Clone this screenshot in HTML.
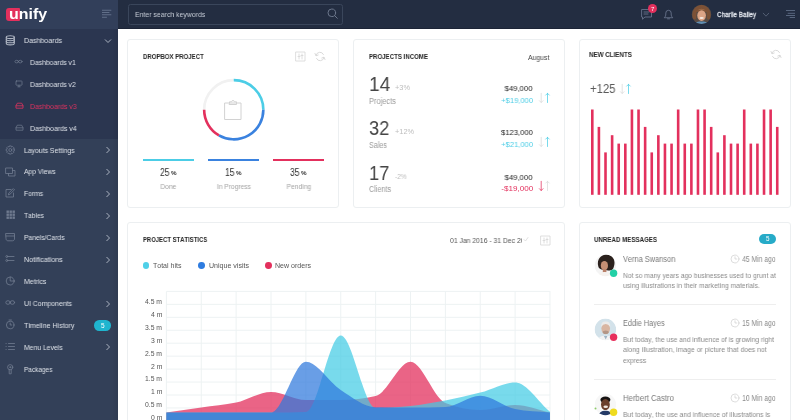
<!DOCTYPE html><html><head><meta charset="utf-8"><style>
html,body{margin:0;padding:0;width:800px;height:420px;overflow:hidden;background:#fff;font-family:"Liberation Sans",sans-serif;}
.r{position:absolute;}
.t{position:absolute;white-space:nowrap;line-height:1;font-kerning:none;will-change:transform;}
</style></head><body>
<div class="r" style="left:0px;top:0px;width:118px;height:29px;background:#323f5a;"></div>
<div class="r" style="left:0px;top:29px;width:118px;height:110px;background:#2b3650;"></div>
<div class="r" style="left:0px;top:139px;width:118px;height:281px;background:#334058;"></div>
<div class="r" style="left:112px;top:29px;width:6px;height:391px;background:linear-gradient(90deg, rgba(0,0,0,0), rgba(0,0,0,0.07));"></div>
<div class="r" style="left:118px;top:0px;width:682px;height:29px;background:#232d41;"></div>
<div class="r" style="left:118px;top:28px;width:682px;height:1px;background:#1c2436;"></div>
<div class="r" style="left:6px;top:7.5px;width:13.5px;height:13px;background:#e3305d;border-radius:3px 1px 1px 3px"></div>
<div class="t" style="left:9.20px;top:6.33px;font-size:15.2px;color:#ffffff;font-weight:bold;transform:scaleX(1.052);transform-origin:left 50%;">unify</div>
<svg class="r" style="left:101px;top:9px" width="12" height="10"><g stroke="#66758e" stroke-width="0.9"><line x1="1" y1="1.25" x2="10.3" y2="1.25"/><line x1="1" y1="3.5" x2="8.4" y2="3.5"/><line x1="1" y1="5.75" x2="10.3" y2="5.75"/><line x1="1" y1="8.25" x2="5.9" y2="8.25"/></g></svg>
<div class="t" style="left:23.60px;top:36.92px;font-size:7.3px;color:#dde1e8;transform:scaleX(0.965);transform-origin:left 50%;">Dashboards</div>
<svg class="r" style="left:104px;top:37.6px" width="8" height="6"><polyline points="1,1.5 4,4.5 7,1.5" fill="none" stroke="#aab2c0" stroke-width="1"/></svg>
<div class="t" style="left:29.60px;top:58.84px;font-size:7.3px;color:#dde1e8;transform:scaleX(0.933);transform-origin:left 50%;">Dashboards v1</div>
<div class="t" style="left:29.60px;top:80.76px;font-size:7.3px;color:#dde1e8;transform:scaleX(0.933);transform-origin:left 50%;">Dashboards v2</div>
<div class="t" style="left:29.60px;top:102.68px;font-size:7.3px;color:#e0325f;transform:scaleX(0.951);transform-origin:left 50%;">Dashboards v3</div>
<div class="t" style="left:29.60px;top:124.60px;font-size:7.3px;color:#dde1e8;transform:scaleX(0.951);transform-origin:left 50%;">Dashboards v4</div>
<div class="t" style="left:23.60px;top:146.52px;font-size:7.3px;color:#dde1e8;transform:scaleX(0.938);transform-origin:left 50%;">Layouts Settings</div>
<svg class="r" style="left:105px;top:146.20000000000002px" width="6" height="8"><polyline points="1.5,1 4.5,4 1.5,7" fill="none" stroke="#aab2c0" stroke-width="1"/></svg>
<div class="t" style="left:23.60px;top:168.44px;font-size:7.3px;color:#dde1e8;transform:scaleX(0.919);transform-origin:left 50%;">App Views</div>
<svg class="r" style="left:105px;top:168.12px" width="6" height="8"><polyline points="1.5,1 4.5,4 1.5,7" fill="none" stroke="#aab2c0" stroke-width="1"/></svg>
<div class="t" style="left:23.60px;top:190.36px;font-size:7.3px;color:#dde1e8;transform:scaleX(0.924);transform-origin:left 50%;">Forms</div>
<svg class="r" style="left:105px;top:190.04px" width="6" height="8"><polyline points="1.5,1 4.5,4 1.5,7" fill="none" stroke="#aab2c0" stroke-width="1"/></svg>
<div class="t" style="left:23.60px;top:212.28px;font-size:7.3px;color:#dde1e8;transform:scaleX(0.908);transform-origin:left 50%;">Tables</div>
<svg class="r" style="left:105px;top:211.96px" width="6" height="8"><polyline points="1.5,1 4.5,4 1.5,7" fill="none" stroke="#aab2c0" stroke-width="1"/></svg>
<div class="t" style="left:23.60px;top:234.20px;font-size:7.3px;color:#dde1e8;transform:scaleX(0.926);transform-origin:left 50%;">Panels/Cards</div>
<svg class="r" style="left:105px;top:233.88000000000002px" width="6" height="8"><polyline points="1.5,1 4.5,4 1.5,7" fill="none" stroke="#aab2c0" stroke-width="1"/></svg>
<div class="t" style="left:23.60px;top:256.12px;font-size:7.3px;color:#dde1e8;transform:scaleX(0.976);transform-origin:left 50%;">Notifications</div>
<svg class="r" style="left:105px;top:255.8px" width="6" height="8"><polyline points="1.5,1 4.5,4 1.5,7" fill="none" stroke="#aab2c0" stroke-width="1"/></svg>
<div class="t" style="left:23.60px;top:278.04px;font-size:7.3px;color:#dde1e8;transform:scaleX(0.957);transform-origin:left 50%;">Metrics</div>
<div class="t" style="left:23.60px;top:299.96px;font-size:7.3px;color:#dde1e8;transform:scaleX(0.946);transform-origin:left 50%;">UI Components</div>
<svg class="r" style="left:105px;top:299.64000000000004px" width="6" height="8"><polyline points="1.5,1 4.5,4 1.5,7" fill="none" stroke="#aab2c0" stroke-width="1"/></svg>
<div class="t" style="left:23.60px;top:321.88px;font-size:7.3px;color:#dde1e8;transform:scaleX(0.963);transform-origin:left 50%;">Timeline History</div>
<div class="r" style="left:94.3px;top:320.4px;width:16.8px;height:10.3px;border-radius:5.2px;background:#1fb5cf"></div>
<div class="t" style="left:100.89px;top:322.70px;font-size:6.5px;color:#ffffff;">5</div>
<div class="t" style="left:23.60px;top:343.80px;font-size:7.3px;color:#dde1e8;transform:scaleX(0.935);transform-origin:left 50%;">Menu Levels</div>
<svg class="r" style="left:105px;top:343.48px" width="6" height="8"><polyline points="1.5,1 4.5,4 1.5,7" fill="none" stroke="#aab2c0" stroke-width="1"/></svg>
<div class="t" style="left:23.60px;top:365.72px;font-size:7.3px;color:#dde1e8;transform:scaleX(0.886);transform-origin:left 50%;">Packages</div>
<svg class="r" style="left:5px;top:35.0px" width="11" height="11" viewBox="0 0 11 11"><g fill="none" stroke="#aeb5c2" stroke-width="1.1" stroke-linecap="round" stroke-linejoin="round"><ellipse cx="5.3" cy="2.2" rx="4" ry="1.4"/><path d="M1.3 2.2v6.3c0 .8 1.8 1.4 4 1.4s4-.6 4-1.4V2.2"/><path d="M1.3 4.3c0 .8 1.8 1.4 4 1.4s4-.6 4-1.4"/><path d="M1.3 6.4c0 .8 1.8 1.4 4 1.4s4-.6 4-1.4"/></g></svg>
<svg class="r" style="left:14px;top:58.9px" width="9" height="6" viewBox="0 0 9 6"><g fill="none" stroke="#717c91" stroke-width="0.7" stroke-linecap="round" stroke-linejoin="round"><ellipse cx="2.7" cy="2.6" rx="1.8" ry="1.3"/><ellipse cx="6.3" cy="2.6" rx="1.8" ry="1.3"/></g></svg>
<svg class="r" style="left:15px;top:80.3px" width="8" height="8" viewBox="0 0 8 8"><g fill="none" stroke="#717c91" stroke-width="0.7" stroke-linecap="round" stroke-linejoin="round"><rect x="1" y="1" width="6" height="4.2" rx="0.5"/><line x1="4" y1="5.2" x2="4" y2="6.8"/><line x1="2.8" y1="6.8" x2="5.2" y2="6.8"/></g></svg>
<svg class="r" style="left:14.5px;top:102.4px" width="9" height="7" viewBox="0 0 9 7"><g fill="none" stroke="#e0325f" stroke-width="0.8" stroke-linecap="round" stroke-linejoin="round"><path d="M1 5.8V3.8L2.3 1.2h4.4L8 3.8v2z"/><line x1="1" y1="3.8" x2="8" y2="3.8"/></g></svg>
<svg class="r" style="left:14.5px;top:124.3px" width="9" height="7" viewBox="0 0 9 7"><g fill="none" stroke="#717c91" stroke-width="0.7" stroke-linecap="round" stroke-linejoin="round"><path d="M1 5.8V3.8L2.3 1.2h4.4L8 3.8v2z"/><line x1="1" y1="3.8" x2="8" y2="3.8"/></g></svg>
<svg class="r" style="left:5px;top:144.6px" width="11" height="10" viewBox="0 0 11 10"><g fill="none" stroke="#717c91" stroke-width="0.75" stroke-linecap="round" stroke-linejoin="round"><path d="M9.40 4.08L9.40 5.92L8.29 6.13L8.21 6.32L8.85 7.25L7.55 8.55L6.62 7.91L6.43 7.99L6.22 9.10L4.38 9.10L4.17 7.99L3.98 7.91L3.05 8.55L1.75 7.25L2.39 6.32L2.31 6.13L1.20 5.92L1.20 4.08L2.31 3.87L2.39 3.68L1.75 2.75L3.05 1.45L3.98 2.09L4.17 2.01L4.38 0.90L6.22 0.90L6.43 2.01L6.62 2.09L7.55 1.45L8.85 2.75L8.21 3.68L8.29 3.87Z"/><circle cx="5.3" cy="5" r="1.5"/></g></svg>
<svg class="r" style="left:5px;top:166.52px" width="11" height="10" viewBox="0 0 11 10"><g fill="none" stroke="#717c91" stroke-width="0.8" stroke-linecap="round" stroke-linejoin="round"><rect x="1" y="1" width="6.5" height="5.5"/><path d="M3.5 6.5v2.5h6.5v-5.5h-2.5"/></g></svg>
<svg class="r" style="left:5px;top:188.44px" width="11" height="10" viewBox="0 0 11 10"><g fill="none" stroke="#717c91" stroke-width="0.8" stroke-linecap="round" stroke-linejoin="round"><path d="M6 1.5H1v7.5h7.5V5"/><path d="M3.5 6.5l.4-1.6L8.3.6l1.2 1.2-4.4 4.3z"/></g></svg>
<svg class="r" style="left:5.5px;top:210.4px" width="10" height="10"><rect x="0.5" y="0.5" width="2.4" height="2.4" fill="#6f7a8f"/><rect x="0.5" y="3.5" width="2.4" height="2.4" fill="#6f7a8f"/><rect x="0.5" y="6.5" width="2.4" height="2.4" fill="#6f7a8f"/><rect x="3.5" y="0.5" width="2.4" height="2.4" fill="#6f7a8f"/><rect x="3.5" y="3.5" width="2.4" height="2.4" fill="#6f7a8f"/><rect x="3.5" y="6.5" width="2.4" height="2.4" fill="#6f7a8f"/><rect x="6.5" y="0.5" width="2.4" height="2.4" fill="#6f7a8f"/><rect x="6.5" y="3.5" width="2.4" height="2.4" fill="#6f7a8f"/><rect x="6.5" y="6.5" width="2.4" height="2.4" fill="#6f7a8f"/></svg>
<svg class="r" style="left:5px;top:232.28px" width="11" height="10" viewBox="0 0 11 10"><g fill="none" stroke="#717c91" stroke-width="0.8" stroke-linecap="round" stroke-linejoin="round"><path d="M1 1.5h8.5v5.5c0 1-1 1.8-2 1.8H3c-1 0-2-.8-2-1.8z"/><line x1="1" y1="4" x2="9.5" y2="4"/></g></svg>
<svg class="r" style="left:5px;top:254.2px" width="11" height="10" viewBox="0 0 11 10"><g fill="none" stroke="#717c91" stroke-width="0.8" stroke-linecap="round" stroke-linejoin="round"><circle cx="1.8" cy="2.5" r="1"/><line x1="3.5" y1="2.5" x2="9" y2="2.5"/><circle cx="1.8" cy="6.5" r="1"/><line x1="3.5" y1="6.5" x2="9" y2="6.5"/></g></svg>
<svg class="r" style="left:5px;top:276.12px" width="11" height="10" viewBox="0 0 11 10"><g fill="none" stroke="#717c91" stroke-width="0.8" stroke-linecap="round" stroke-linejoin="round"><circle cx="5.2" cy="5" r="4"/><path d="M5.2 1v4h4"/></g></svg>
<svg class="r" style="left:5px;top:299.04px" width="11" height="8" viewBox="0 0 11 8"><g fill="none" stroke="#717c91" stroke-width="0.8" stroke-linecap="round" stroke-linejoin="round"><ellipse cx="3" cy="3.5" rx="2.2" ry="1.8"/><ellipse cx="7.4" cy="3.5" rx="2.2" ry="1.8"/></g></svg>
<svg class="r" style="left:5px;top:318.96px" width="11" height="11" viewBox="0 0 11 11"><g fill="none" stroke="#717c91" stroke-width="0.8" stroke-linecap="round" stroke-linejoin="round"><circle cx="5.2" cy="6" r="3.8"/><path d="M5.2 4v2h1.5"/><line x1="4" y1="1" x2="6.4" y2="1"/></g></svg>
<svg class="r" style="left:5px;top:341.88px" width="11" height="9" viewBox="0 0 11 9"><g fill="none" stroke="#717c91" stroke-width="0.8" stroke-linecap="round" stroke-linejoin="round"><line x1="1" y1="1.5" x2="1.2" y2="1.5"/><line x1="1" y1="4.5" x2="1.2" y2="4.5"/><line x1="1" y1="7.5" x2="1.2" y2="7.5"/><line x1="3.5" y1="1.5" x2="9.5" y2="1.5"/><line x1="3.5" y1="4.5" x2="9.5" y2="4.5"/><line x1="3.5" y1="7.5" x2="9.5" y2="7.5"/></g></svg>
<svg class="r" style="left:6px;top:363.8px" width="9" height="11" viewBox="0 0 9 11"><g fill="none" stroke="#717c91" stroke-width="0.8" stroke-linecap="round" stroke-linejoin="round"><circle cx="4.2" cy="3.2" r="2.6"/><path d="M3.2 5.6v4.2h2V5.6"/><circle cx="4.2" cy="3.2" r="0.6"/></g></svg>
<div class="r" style="left:128px;top:3.5px;width:214.5px;height:21px;box-sizing:border-box;border:1px solid #3a465b;border-radius:2.5px"></div>
<div class="t" style="left:135.00px;top:11.23px;font-size:8px;color:#c6ccd6;transform:scaleX(0.864);transform-origin:left 50%;">Enter search keywords</div>
<svg class="r" style="left:326px;top:7px" width="13" height="13" viewBox="0 0 13 13"><g fill="none" stroke="#6c778c" stroke-width="1" stroke-linecap="round" stroke-linejoin="round"><circle cx="5.8" cy="5.8" r="3.8"/><line x1="8.6" y1="8.6" x2="11.3" y2="11.3"/></g></svg>
<svg class="r" style="left:640px;top:7px" width="14" height="14" viewBox="0 0 14 14"><g fill="none" stroke="#67728a" stroke-width="0.9" stroke-linecap="round" stroke-linejoin="round"><path d="M2 2.5h9.5v7.5H5l-2.5 2.2V10H2z"/><line x1="4" y1="5" x2="9" y2="5"/><line x1="4" y1="7" x2="8" y2="7"/></g></svg>
<div class="r" style="left:648.2px;top:3.6px;width:9px;height:9px;border-radius:50%;background:#e3305d"></div>
<div class="t" style="left:651.03px;top:5.82px;font-size:6px;color:#ffffff;">7</div>
<svg class="r" style="left:663px;top:8px" width="11" height="12" viewBox="0 0 11 12"><g fill="none" stroke="#67728a" stroke-width="0.9" stroke-linecap="round" stroke-linejoin="round"><path d="M1.5 9.5c1-.8 1.3-2 1.3-3.5V5a2.7 2.7 0 0 1 5.4 0v1c0 1.5.3 2.7 1.3 3.5z"/><path d="M4.5 10.8h2"/></g></svg>
<div class="t" style="left:717.30px;top:10.60px;font-size:7.8px;color:#dfe3ea;transform:scaleX(0.813);transform-origin:left 50%;-webkit-text-stroke:0.3px #dfe3ea;">Charlie Bailey</div>
<svg class="r" style="left:762px;top:12px" width="9" height="6" viewBox="0 0 9 6"><g fill="none" stroke="#5f6b80" stroke-width="0.8" stroke-linecap="round" stroke-linejoin="round"><polyline points="1.2,1.2 4,4.2 6.8,1.2"/></g></svg>
<svg class="r" style="left:785px;top:9px" width="12" height="10"><g stroke="#5f6d86" stroke-width="0.9"><line x1="1" y1="1.5" x2="10" y2="1.5"/><line x1="2.7" y1="4.3" x2="10" y2="4.3"/><line x1="1" y1="6.5" x2="10" y2="6.5"/><line x1="4.7" y1="8.5" x2="10" y2="8.5"/></g></svg>
<div class="r" style="left:127px;top:39px;width:212px;height:168.5px;box-sizing:border-box;border:1px solid #eceff1;border-radius:3px;background:#fff"></div>
<div class="r" style="left:353.3px;top:39px;width:211.5px;height:168.5px;box-sizing:border-box;border:1px solid #eceff1;border-radius:3px;background:#fff"></div>
<div class="r" style="left:579.3px;top:39px;width:211.8px;height:168.5px;box-sizing:border-box;border:1px solid #eceff1;border-radius:3px;background:#fff"></div>
<div class="r" style="left:127px;top:221.5px;width:437.8px;height:220px;box-sizing:border-box;border:1px solid #eceff1;border-radius:3px;background:#fff"></div>
<div class="r" style="left:579.3px;top:221.5px;width:211.8px;height:220px;box-sizing:border-box;border:1px solid #eceff1;border-radius:3px;background:#fff"></div>
<div class="t" style="left:142.80px;top:52.82px;font-size:7.3px;color:#262626;font-weight:bold;transform:scaleX(0.827);transform-origin:left 50%;">DROPBOX PROJECT</div>
<svg class="r" style="left:295px;top:50.5px" width="11" height="11" viewBox="0 0 11 11"><g fill="none" stroke="#d6d6d6" stroke-width="0.8" stroke-linecap="round" stroke-linejoin="round"><rect x="1" y="1" width="9" height="9"/><line x1="4" y1="3" x2="4" y2="8"/><line x1="7" y1="3" x2="7" y2="8"/><line x1="3" y1="5.5" x2="5" y2="5.5"/><line x1="6" y1="4.5" x2="8" y2="4.5"/></g></svg>
<svg class="r" style="left:314px;top:50.5px" width="12" height="11" viewBox="0 0 12 11"><g fill="none" stroke="#d6d6d6" stroke-width="0.9" stroke-linecap="round" stroke-linejoin="round"><path d="M2 4.5A4 4 0 0 1 9.5 3.5"/><path d="M10 6.5A4 4 0 0 1 2.5 7.5"/><polyline points="1,2.5 2,4.8 4.2,4"/><polyline points="11,8.5 10,6.2 7.8,7"/></g></svg>
<svg class="r" style="left:0;top:0" width="800" height="420"><path d="M204.15 109.75A29.6 29.6 0 0 1 233.75 80.15" stroke="#f1f1f1" stroke-width="2.6" fill="none"/><path d="M233.75 80.15A29.6 29.6 0 0 1 263.35 109.75" stroke="#4ccde6" stroke-width="2.6" fill="none"/><path d="M263.35 109.75A29.6 29.6 0 0 1 218.95 135.38" stroke="#3a82df" stroke-width="2.6" fill="none"/><path d="M218.95 135.38A29.6 29.6 0 0 1 204.15 109.75" stroke="#e3305d" stroke-width="2.6" fill="none"/></svg>
<svg class="r" style="left:223px;top:100px" width="20" height="21" viewBox="0 0 20 21"><g fill="none" stroke="#d2d2d2" stroke-width="1" stroke-linecap="round" stroke-linejoin="round"><rect x="2" y="3" width="16" height="16.5"/><path d="M6.5 3V1.8h2.2A1.3 1.3 0 0 1 11.3 1.8h2.2V3v1.5h-7z"/></g></svg>
<div class="r" style="left:143px;top:159.1px;width:51px;height:1.9px;background:#4ccde6;"></div>
<div class="r" style="left:208px;top:159.1px;width:51px;height:1.9px;background:#3a82df;"></div>
<div class="r" style="left:273px;top:159.1px;width:51px;height:1.9px;background:#e3305d;"></div>
<div class="t" style="left:159.60px;top:168.23px;font-size:10px;color:#2e2e2e;transform:scaleX(0.854);transform-origin:left 50%;">25</div>
<div class="t" style="left:171.40px;top:170.02px;font-size:6px;color:#333333;font-weight:bold;transform:scaleX(1.050);transform-origin:left 50%;">%</div>
<div class="t" style="left:160.13px;top:183.07px;font-size:7px;color:#a3a3a3;transform:scaleX(0.956);transform-origin:center 50%;">Done</div>
<div class="t" style="left:224.60px;top:168.23px;font-size:10px;color:#2e2e2e;transform:scaleX(0.854);transform-origin:left 50%;">15</div>
<div class="t" style="left:236.40px;top:170.02px;font-size:6px;color:#333333;font-weight:bold;transform:scaleX(1.050);transform-origin:left 50%;">%</div>
<div class="t" style="left:215.60px;top:183.07px;font-size:7px;color:#a3a3a3;transform:scaleX(0.950);transform-origin:center 50%;">In Progress</div>
<div class="t" style="left:289.60px;top:168.23px;font-size:10px;color:#2e2e2e;transform:scaleX(0.854);transform-origin:left 50%;">35</div>
<div class="t" style="left:301.40px;top:170.02px;font-size:6px;color:#333333;font-weight:bold;transform:scaleX(1.050);transform-origin:left 50%;">%</div>
<div class="t" style="left:285.66px;top:183.07px;font-size:7px;color:#a3a3a3;transform:scaleX(0.954);transform-origin:center 50%;">Pending</div>
<div class="t" style="left:368.50px;top:53.32px;font-size:7.3px;color:#262626;font-weight:bold;transform:scaleX(0.836);transform-origin:left 50%;">PROJECTS INCOME</div>
<div class="t" style="left:527.28px;top:53.61px;font-size:7.2px;color:#444444;transform:scaleX(0.955);transform-origin:right 50%;">August</div>
<div class="t" style="left:369.20px;top:74.25px;font-size:20.5px;color:#454545;transform:scaleX(0.934);transform-origin:left 50%;">14</div>
<div class="t" style="left:395.00px;top:85.24px;font-size:6.8px;color:#bdbdbd;transform:scaleX(1.087);transform-origin:left 50%;">+3%</div>
<div class="t" style="left:369.00px;top:96.97px;font-size:8.3px;color:#9a9a9a;transform:scaleX(0.901);transform-origin:left 50%;">Projects</div>
<div class="t" style="left:504.44px;top:85.11px;font-size:7.9px;color:#222222;transform:scaleX(0.981);transform-origin:right 50%;">$49,000</div>
<div class="t" style="left:499.83px;top:96.51px;font-size:7.9px;color:#4ccde6;transform:scaleX(0.965);transform-origin:right 50%;">+$19,000</div>
<svg class="r" style="left:537px;top:92.0px" width="15" height="12" viewBox="0 0 15 12"><g fill="none" stroke="#717c91" stroke-width="0.75" stroke-linecap="round" stroke-linejoin="round"><g stroke="#d9d9d9"><line x1="4.2" y1="1.3" x2="4.2" y2="10.5"/><polyline points="2.4,8.7 4.2,10.5 6,8.7"/></g><g stroke="#4ccde6"><line x1="10.5" y1="1.3" x2="10.5" y2="10.5"/><polyline points="8.7,3.1 10.5,1.3 12.3,3.1"/></g></g></svg>
<div class="t" style="left:369.20px;top:118.45px;font-size:20.5px;color:#454545;transform:scaleX(0.886);transform-origin:left 50%;">32</div>
<div class="t" style="left:395.00px;top:129.44px;font-size:6.8px;color:#bdbdbd;transform:scaleX(1.081);transform-origin:left 50%;">+12%</div>
<div class="t" style="left:369.00px;top:141.17px;font-size:8.3px;color:#9a9a9a;transform:scaleX(0.867);transform-origin:left 50%;">Sales</div>
<div class="t" style="left:500.05px;top:129.31px;font-size:7.9px;color:#222222;transform:scaleX(0.971);transform-origin:right 50%;">$123,000</div>
<div class="t" style="left:499.83px;top:140.71px;font-size:7.9px;color:#4ccde6;transform:scaleX(0.965);transform-origin:right 50%;">+$21,000</div>
<svg class="r" style="left:537px;top:136.2px" width="15" height="12" viewBox="0 0 15 12"><g fill="none" stroke="#717c91" stroke-width="0.75" stroke-linecap="round" stroke-linejoin="round"><g stroke="#d9d9d9"><line x1="4.2" y1="1.3" x2="4.2" y2="10.5"/><polyline points="2.4,8.7 4.2,10.5 6,8.7"/></g><g stroke="#4ccde6"><line x1="10.5" y1="1.3" x2="10.5" y2="10.5"/><polyline points="8.7,3.1 10.5,1.3 12.3,3.1"/></g></g></svg>
<div class="t" style="left:369.20px;top:162.65px;font-size:20.5px;color:#454545;transform:scaleX(0.886);transform-origin:left 50%;">17</div>
<div class="t" style="left:395.00px;top:173.64px;font-size:6.8px;color:#bdbdbd;transform:scaleX(0.951);transform-origin:left 50%;">-2%</div>
<div class="t" style="left:369.00px;top:185.37px;font-size:8.3px;color:#9a9a9a;transform:scaleX(0.867);transform-origin:left 50%;">Clients</div>
<div class="t" style="left:504.44px;top:173.51px;font-size:7.9px;color:#222222;transform:scaleX(0.981);transform-origin:right 50%;">$49,000</div>
<div class="t" style="left:501.81px;top:184.91px;font-size:7.9px;color:#e3305d;transform:scaleX(1.026);transform-origin:right 50%;">-$19,000</div>
<svg class="r" style="left:537px;top:180.4px" width="15" height="12" viewBox="0 0 15 12"><g fill="none" stroke="#717c91" stroke-width="0.75" stroke-linecap="round" stroke-linejoin="round"><g stroke="#e3305d"><line x1="4.2" y1="1.3" x2="4.2" y2="10.5"/><polyline points="2.4,8.7 4.2,10.5 6,8.7"/></g><g stroke="#d9d9d9"><line x1="10.5" y1="1.3" x2="10.5" y2="10.5"/><polyline points="8.7,3.1 10.5,1.3 12.3,3.1"/></g></g></svg>
<div class="t" style="left:589.20px;top:51.02px;font-size:7.3px;color:#262626;font-weight:bold;transform:scaleX(0.851);transform-origin:left 50%;">NEW CLIENTS</div>
<svg class="r" style="left:770px;top:48.5px" width="12" height="11" viewBox="0 0 12 11"><g fill="none" stroke="#d6d6d6" stroke-width="0.9" stroke-linecap="round" stroke-linejoin="round"><path d="M2 4.5A4 4 0 0 1 9.5 3.5"/><path d="M10 6.5A4 4 0 0 1 2.5 7.5"/><polyline points="1,2.5 2,4.8 4.2,4"/><polyline points="11,8.5 10,6.2 7.8,7"/></g></svg>
<div class="t" style="left:589.50px;top:83.14px;font-size:12px;color:#5a5a5a;transform:scaleX(0.943);transform-origin:left 50%;">+125</div>
<svg class="r" style="left:618px;top:83px" width="15" height="12" viewBox="0 0 15 12"><g fill="none" stroke="#717c91" stroke-width="0.75" stroke-linecap="round" stroke-linejoin="round"><g stroke="#d9d9d9"><line x1="4.2" y1="1.3" x2="4.2" y2="10.5"/><polyline points="2.4,8.7 4.2,10.5 6,8.7"/></g><g stroke="#4ccde6"><line x1="10.5" y1="1.3" x2="10.5" y2="10.5"/><polyline points="8.7,3.1 10.5,1.3 12.3,3.1"/></g></g></svg>
<svg class="r" style="left:0;top:0" width="800" height="420"><rect x="591.00" y="109.5" width="2.6" height="85.3" fill="#e3305d"/><rect x="597.61" y="126.9" width="2.6" height="67.9" fill="#e3305d"/><rect x="604.21" y="152.4" width="2.6" height="42.4" fill="#e3305d"/><rect x="610.82" y="135.2" width="2.6" height="59.6" fill="#e3305d"/><rect x="617.42" y="143.6" width="2.6" height="51.2" fill="#e3305d"/><rect x="624.02" y="143.6" width="2.6" height="51.2" fill="#e3305d"/><rect x="630.63" y="109.5" width="2.6" height="85.3" fill="#e3305d"/><rect x="637.24" y="109.5" width="2.6" height="85.3" fill="#e3305d"/><rect x="643.84" y="126.9" width="2.6" height="67.9" fill="#e3305d"/><rect x="650.45" y="152.4" width="2.6" height="42.4" fill="#e3305d"/><rect x="657.05" y="135.2" width="2.6" height="59.6" fill="#e3305d"/><rect x="663.65" y="143.6" width="2.6" height="51.2" fill="#e3305d"/><rect x="670.26" y="143.6" width="2.6" height="51.2" fill="#e3305d"/><rect x="676.87" y="109.5" width="2.6" height="85.3" fill="#e3305d"/><rect x="683.47" y="143.6" width="2.6" height="51.2" fill="#e3305d"/><rect x="690.08" y="143.6" width="2.6" height="51.2" fill="#e3305d"/><rect x="696.68" y="109.5" width="2.6" height="85.3" fill="#e3305d"/><rect x="703.28" y="109.5" width="2.6" height="85.3" fill="#e3305d"/><rect x="709.89" y="126.9" width="2.6" height="67.9" fill="#e3305d"/><rect x="716.50" y="152.4" width="2.6" height="42.4" fill="#e3305d"/><rect x="723.10" y="135.2" width="2.6" height="59.6" fill="#e3305d"/><rect x="729.71" y="143.6" width="2.6" height="51.2" fill="#e3305d"/><rect x="736.31" y="143.6" width="2.6" height="51.2" fill="#e3305d"/><rect x="742.91" y="109.5" width="2.6" height="85.3" fill="#e3305d"/><rect x="749.52" y="143.6" width="2.6" height="51.2" fill="#e3305d"/><rect x="756.12" y="143.6" width="2.6" height="51.2" fill="#e3305d"/><rect x="762.73" y="109.5" width="2.6" height="85.3" fill="#e3305d"/><rect x="769.34" y="109.5" width="2.6" height="85.3" fill="#e3305d"/><rect x="775.94" y="126.9" width="2.6" height="67.9" fill="#e3305d"/></svg>
<div class="t" style="left:142.50px;top:236.42px;font-size:7.3px;color:#262626;font-weight:bold;transform:scaleX(0.812);transform-origin:left 50%;">PROJECT STATISTICS</div>
<div class="r" style="left:448px;top:234px;width:78px;height:12px;overflow:hidden"></div>
<div class="t" style="left:450.10px;top:236.57px;font-size:7px;color:#555555;transform:scaleX(0.971);transform-origin:left 50%;clip-path:inset(0 13% 0 0);">01 Jan 2016 - 31 Dec 2016</div>
<svg class="r" style="left:523px;top:236px" width="6" height="6" viewBox="0 0 6 6"><g fill="none" stroke="#cccccc" stroke-width="0.6" stroke-linecap="round" stroke-linejoin="round"><polyline points="1,3.5 2.5,5 5,1.5"/></g></svg>
<svg class="r" style="left:539.5px;top:234.5px" width="11" height="11" viewBox="0 0 11 11"><g fill="none" stroke="#d6d6d6" stroke-width="0.8" stroke-linecap="round" stroke-linejoin="round"><rect x="1" y="1" width="9" height="9"/><line x1="4" y1="3" x2="4" y2="8"/><line x1="7" y1="3" x2="7" y2="8"/><line x1="3" y1="5.5" x2="5" y2="5.5"/><line x1="6" y1="4.5" x2="8" y2="4.5"/></g></svg>
<div class="r" style="left:142.6px;top:262.20000000000005px;width:6.8px;height:6.8px;border-radius:50%;background:#4fd0e8"></div>
<div class="t" style="left:153.00px;top:262.17px;font-size:7px;color:#555555;transform:scaleX(0.986);transform-origin:left 50%;">Total hits</div>
<div class="r" style="left:198.4px;top:262.20000000000005px;width:6.8px;height:6.8px;border-radius:50%;background:#2e7ce0"></div>
<div class="t" style="left:208.80px;top:262.17px;font-size:7px;color:#555555;transform:scaleX(1.008);transform-origin:left 50%;">Unique visits</div>
<div class="r" style="left:265.0px;top:262.20000000000005px;width:6.8px;height:6.8px;border-radius:50%;background:#e3305d"></div>
<div class="t" style="left:275.40px;top:262.17px;font-size:7px;color:#555555;transform:scaleX(1.006);transform-origin:left 50%;">New orders</div>
<svg class="r" style="left:0;top:0" width="800" height="420"><g stroke="#edf2f3" stroke-width="1"><line x1="166.4" y1="291.40" x2="550.2" y2="291.40"/><line x1="166.4" y1="304.35" x2="550.2" y2="304.35"/><line x1="166.4" y1="317.30" x2="550.2" y2="317.30"/><line x1="166.4" y1="330.25" x2="550.2" y2="330.25"/><line x1="166.4" y1="343.20" x2="550.2" y2="343.20"/><line x1="166.4" y1="356.15" x2="550.2" y2="356.15"/><line x1="166.4" y1="369.10" x2="550.2" y2="369.10"/><line x1="166.4" y1="382.05" x2="550.2" y2="382.05"/><line x1="166.4" y1="395.00" x2="550.2" y2="395.00"/><line x1="166.4" y1="407.95" x2="550.2" y2="407.95"/><line x1="166.4" y1="420.90" x2="550.2" y2="420.90"/><line x1="166.40" y1="291.4" x2="166.40" y2="421"/><line x1="201.27" y1="291.4" x2="201.27" y2="421"/><line x1="236.14" y1="291.4" x2="236.14" y2="421"/><line x1="271.01" y1="291.4" x2="271.01" y2="421"/><line x1="305.88" y1="291.4" x2="305.88" y2="421"/><line x1="340.75" y1="291.4" x2="340.75" y2="421"/><line x1="375.62" y1="291.4" x2="375.62" y2="421"/><line x1="410.49" y1="291.4" x2="410.49" y2="421"/><line x1="445.36" y1="291.4" x2="445.36" y2="421"/><line x1="480.23" y1="291.4" x2="480.23" y2="421"/><line x1="515.10" y1="291.4" x2="515.10" y2="421"/><line x1="549.97" y1="291.4" x2="549.97" y2="421"/></g></svg>
<div class="t" style="left:145.19px;top:298.79px;font-size:6.8px;color:#555555;">4.5 m</div>
<div class="t" style="left:150.86px;top:311.74px;font-size:6.8px;color:#555555;">4 m</div>
<div class="t" style="left:145.19px;top:324.69px;font-size:6.8px;color:#555555;">3.5 m</div>
<div class="t" style="left:150.86px;top:337.64px;font-size:6.8px;color:#555555;">3 m</div>
<div class="t" style="left:145.19px;top:350.59px;font-size:6.8px;color:#555555;">2.5 m</div>
<div class="t" style="left:150.86px;top:363.54px;font-size:6.8px;color:#555555;">2 m</div>
<div class="t" style="left:145.19px;top:376.49px;font-size:6.8px;color:#555555;">1.5 m</div>
<div class="t" style="left:150.86px;top:389.44px;font-size:6.8px;color:#555555;">1 m</div>
<div class="t" style="left:145.19px;top:402.39px;font-size:6.8px;color:#555555;">0.5 m</div>
<div class="t" style="left:150.86px;top:415.34px;font-size:6.8px;color:#555555;">0 m</div>
<svg class="r" style="left:0;top:0" width="800" height="420"><path d="M166.40 421L166.40 412.60C178.02 410.87 189.65 409.07 201.27 407.40C212.89 405.73 224.52 405.17 236.14 402.60C247.76 400.03 259.39 392.00 271.01 392.00C282.63 392.00 294.26 400.00 305.88 400.00C317.50 400.00 329.13 400.00 340.75 400.00C352.37 400.00 364.00 398.67 375.62 396.00C387.24 393.33 398.87 361.70 410.49 361.70C422.11 361.70 433.74 398.33 445.36 403.00C456.98 407.67 468.61 410.00 480.23 410.00C491.85 410.00 503.48 405.00 515.10 405.00C526.72 405.00 538.35 410.07 549.97 412.60L549.97 421Z" fill="#e3305d" fill-opacity="0.75"/><path d="M166.40 421L166.40 412.60C178.02 412.60 189.65 412.60 201.27 412.60C212.89 412.60 224.52 412.60 236.14 412.60C247.76 412.60 259.39 412.60 271.01 412.60C282.63 412.60 294.26 412.40 305.88 412.00C317.50 411.60 329.13 335.50 340.75 335.50C352.37 335.50 364.00 408.00 375.62 408.00C387.24 408.00 398.87 407.25 410.49 406.00C422.11 404.75 433.74 402.73 445.36 400.50C456.98 398.27 468.61 395.62 480.23 392.60C491.85 389.58 503.48 382.40 515.10 382.40C526.72 382.40 538.35 401.93 549.97 411.70L549.97 421Z" fill="#3fcae4" fill-opacity="0.7"/><path d="M166.40 421L166.40 412.60C178.02 412.60 189.65 412.60 201.27 412.60C212.89 412.60 224.52 412.60 236.14 412.60C247.76 412.60 259.39 412.60 271.01 412.60C282.63 412.60 294.26 361.70 305.88 361.70C317.50 361.70 329.13 382.42 340.75 390.00C352.37 397.58 364.00 406.93 375.62 407.20C387.24 407.47 398.87 407.60 410.49 407.60C422.11 407.60 433.74 407.40 445.36 407.00C456.98 406.60 468.61 395.70 480.23 395.70C491.85 395.70 503.48 406.60 515.10 409.00C526.72 411.40 538.35 411.40 549.97 412.60L549.97 421Z" fill="#2f78dc" fill-opacity="0.72"/></svg>
<div class="t" style="left:593.90px;top:235.82px;font-size:7.3px;color:#262626;font-weight:bold;transform:scaleX(0.845);transform-origin:left 50%;">UNREAD MESSAGES</div>
<div class="r" style="left:759.1px;top:234.3px;width:16.6px;height:9.8px;border-radius:5px;background:#27abc8"></div>
<div class="t" style="left:765.65px;top:236.37px;font-size:6.3px;color:#ffffff;">5</div>
<div class="t" style="left:622.60px;top:254.72px;font-size:8.6px;color:#7a7a7a;transform:scaleX(0.861);transform-origin:left 50%;">Verna Swanson</div>
<div class="t" style="left:733.05px;top:254.82px;font-size:8.6px;color:#8a8a8a;transform:scaleX(0.785);transform-origin:right 50%;">45 Min ago</div>
<svg class="r" style="left:729.5px;top:253.7px" width="10" height="10" viewBox="0 0 10 10"><g fill="none" stroke="#cfcfcf" stroke-width="0.7" stroke-linecap="round" stroke-linejoin="round"><circle cx="5" cy="5" r="4"/><polyline points="5,2.8 5,5 6.8,5"/></g></svg>
<div class="t" style="left:622.60px;top:271.67px;font-size:7.6px;color:#8a8a8a;transform:scaleX(0.883);transform-origin:left 50%;">Not so many years ago businesses used to grunt at</div>
<div class="t" style="left:622.60px;top:282.12px;font-size:7.6px;color:#8a8a8a;transform:scaleX(0.891);transform-origin:left 50%;">using illustrations in their marketing materials.</div>
<div class="t" style="left:622.60px;top:319.02px;font-size:8.6px;color:#7a7a7a;transform:scaleX(0.855);transform-origin:left 50%;">Eddie Hayes</div>
<div class="t" style="left:733.05px;top:319.12px;font-size:8.6px;color:#8a8a8a;transform:scaleX(0.785);transform-origin:right 50%;">15 Min ago</div>
<svg class="r" style="left:729.5px;top:318.0px" width="10" height="10" viewBox="0 0 10 10"><g fill="none" stroke="#cfcfcf" stroke-width="0.7" stroke-linecap="round" stroke-linejoin="round"><circle cx="5" cy="5" r="4"/><polyline points="5,2.8 5,5 6.8,5"/></g></svg>
<div class="t" style="left:622.60px;top:335.97px;font-size:7.6px;color:#8a8a8a;transform:scaleX(0.888);transform-origin:left 50%;">But today, the use and influence of is growing right</div>
<div class="t" style="left:622.60px;top:346.42px;font-size:7.6px;color:#8a8a8a;transform:scaleX(0.900);transform-origin:left 50%;">along illustration, image or picture that does not</div>
<div class="t" style="left:622.60px;top:356.87px;font-size:7.6px;color:#8a8a8a;transform:scaleX(0.872);transform-origin:left 50%;">express</div>
<div class="t" style="left:622.60px;top:393.97px;font-size:8.6px;color:#7a7a7a;transform:scaleX(0.903);transform-origin:left 50%;">Herbert Castro</div>
<div class="t" style="left:733.05px;top:394.07px;font-size:8.6px;color:#8a8a8a;transform:scaleX(0.785);transform-origin:right 50%;">10 Min ago</div>
<svg class="r" style="left:729.5px;top:392.95px" width="10" height="10" viewBox="0 0 10 10"><g fill="none" stroke="#cfcfcf" stroke-width="0.7" stroke-linecap="round" stroke-linejoin="round"><circle cx="5" cy="5" r="4"/><polyline points="5,2.8 5,5 6.8,5"/></g></svg>
<div class="t" style="left:622.60px;top:410.92px;font-size:7.6px;color:#8a8a8a;transform:scaleX(0.894);transform-origin:left 50%;">But today, the use and influence of illustrations is</div>
<svg class="r" style="left:0;top:0" width="800" height="420"><defs><clipPath id="av1"><circle cx="605.4" cy="265.4" r="10.8"/></clipPath></defs><g clip-path="url(#av1)"><circle cx="605.4" cy="265.4" r="10.8" fill="#f4f4f4"/><path d="M597.9 264.4C597.4 257.4 603.4 253.39999999999998 608.4 254.89999999999998C614.4 255.39999999999998 615.4 262.4 613.9 266.4C613.4 269.4 611.4 270.9 608.4 270.4L601.4 269.4C598.4 268.4 598.4 266.4 597.9 264.4Z" fill="#2b211d"/><ellipse cx="604.4" cy="265.7" rx="3.6" ry="4.8" fill="#c58f74"/><rect x="602.8" y="269.4" width="3.6" height="3" fill="#b98069"/><path d="M597.4 277.4Q599.4 271.9 604.4 271.9Q610.4 271.9 612.4 277.4Z" fill="#f6f2ef"/></g><circle cx="613.6" cy="273.2" r="3.7" fill="#22d0a6"/><defs><clipPath id="av2"><circle cx="605.4" cy="329.4" r="10.8"/></clipPath></defs><g clip-path="url(#av2)"><circle cx="605.4" cy="329.4" r="10.8" fill="#d3e2ea"/><ellipse cx="605.6999999999999" cy="328.59999999999997" rx="4.3" ry="5.6" fill="#d9b6a2"/><path d="M601.1 326.9Q600.9 321.4 605.6999999999999 321.59999999999997Q610.4 321.4 610.3 326.9Q608.4 323.9 605.6999999999999 323.9Q602.9 323.9 601.1 326.9Z" fill="#ecebea"/><ellipse cx="605.6999999999999" cy="332.2" rx="3" ry="1.8" fill="#b39686"/><path d="M596.4 341.4Q599.4 335.4 605.6999999999999 335.9Q611.4 335.4 614.4 341.4Z" fill="#f3f3f3"/><path d="M603.9 335.9L605.6999999999999 339.4L607.4 335.9Z" fill="#9fb4c4"/></g><circle cx="613.6" cy="337.2" r="3.7" fill="#e8305d"/><defs><clipPath id="av3"><circle cx="605.4" cy="404.4" r="10.8"/></clipPath></defs><g clip-path="url(#av3)"><circle cx="605.4" cy="404.4" r="10.8" fill="#f7f7f7"/><ellipse cx="605.4" cy="399.79999999999995" rx="5" ry="3.4" fill="#161313"/><ellipse cx="605.4" cy="404.59999999999997" rx="4.4" ry="5.6" fill="#6a3f2c"/><ellipse cx="605.6999999999999" cy="406.7" rx="2.3" ry="1.2" fill="#efe6e0"/><path d="M597.4 416.4Q600.4 410.4 605.4 410.9Q610.4 410.4 613.4 416.4Z" fill="#233a66"/></g><circle cx="613.6" cy="412.2" r="3.7" fill="#efdb1f"/><circle cx="595.5" cy="408.4" r="1" fill="#8ccc6a"/></svg>
<div class="r" style="left:594px;top:304px;width:181.5px;height:1px;background:#eeeeee;"></div>
<div class="r" style="left:594px;top:378.7px;width:181.5px;height:1px;background:#eeeeee;"></div>
<svg class="r" style="left:690px;top:3px" width="23" height="23"><defs><clipPath id="hc"><circle cx="11.5" cy="11.4" r="9.7"/></clipPath></defs><g clip-path="url(#hc)"><rect width="23" height="23" fill="#5a4c44"/><path d="M2.5 15C1.5 7 6 2 11.5 2C17 2 21.5 7 20.5 15C19.5 17 18 17 17 15.5L16.5 9H6.5L6 15.5C5 17 3.5 17 2.5 15Z" fill="#7c5136"/><path d="M6 9Q11.5 2.5 17 9Q15 6.5 11.5 6.8Q8 6.5 6 9Z" fill="#a26f48"/><ellipse cx="11.6" cy="12.6" rx="4.3" ry="5.3" fill="#dca486"/><ellipse cx="11.6" cy="14.9" rx="2.2" ry="1" fill="#f4e8e0"/><path d="M3.5 23Q5 18.5 9 18.5H14Q18 18.5 19.5 23Z" fill="#5f8fb5"/></g></svg>
</body></html>
